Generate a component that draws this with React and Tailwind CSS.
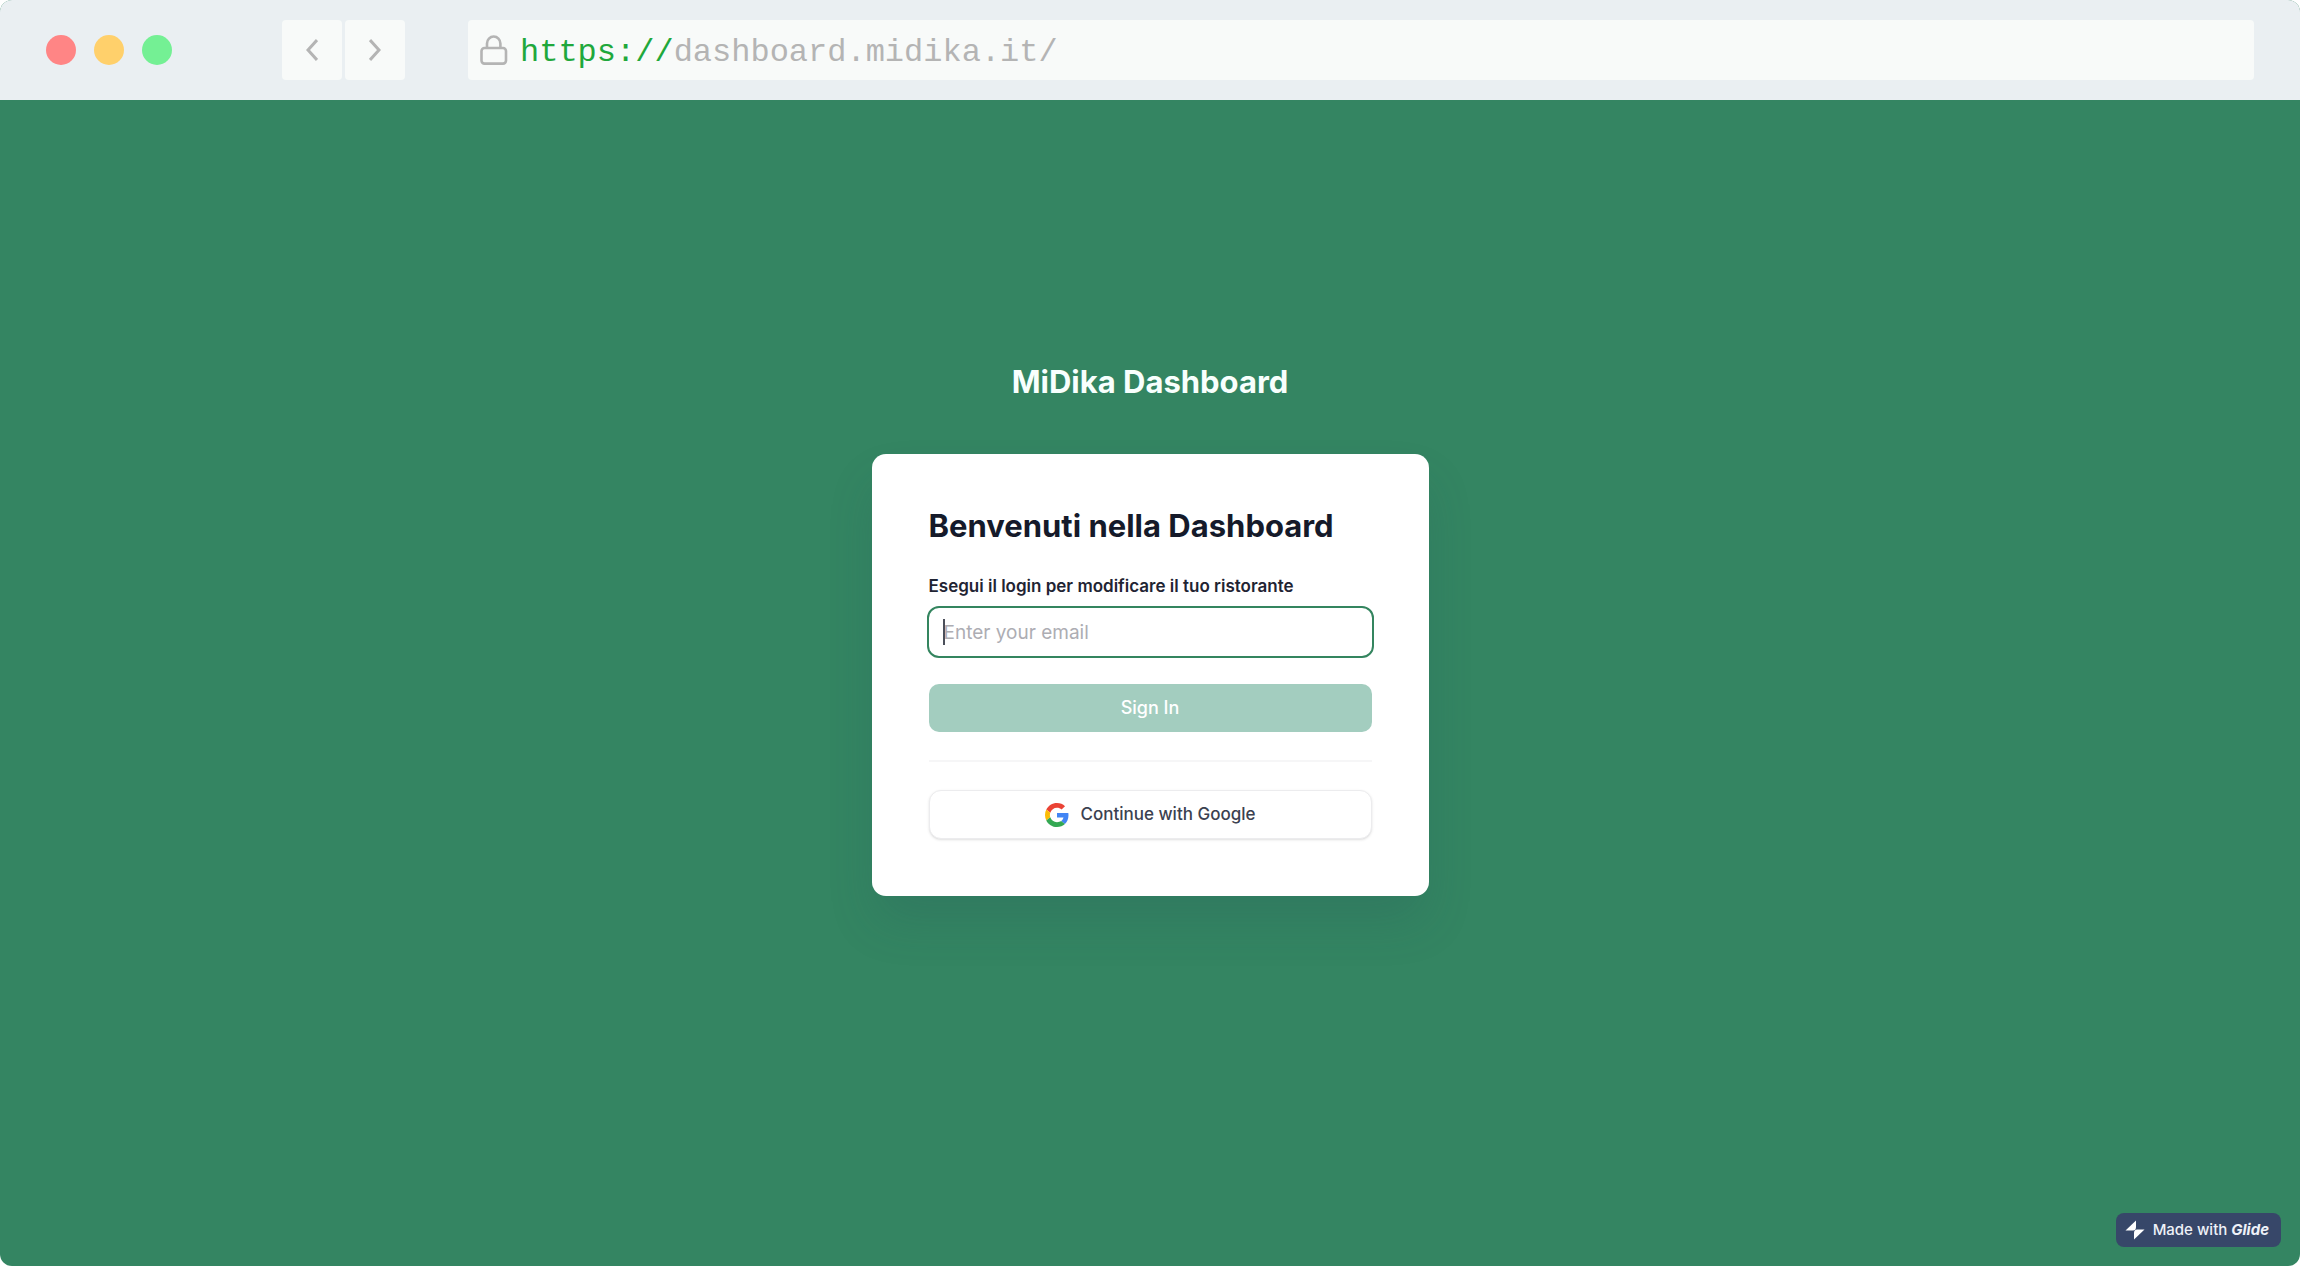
import React from "react";

function GoogleLogo() {
  return (
    <svg viewBox="0 0 48 48" className="size-6" aria-hidden="true">
      <path fill="#EA4335" d="M24 9.5c3.54 0 6.71 1.22 9.21 3.6l6.85-6.85C35.9 2.38 30.47 0 24 0 14.62 0 6.51 5.38 2.56 13.22l7.98 6.19C12.43 13.72 17.74 9.5 24 9.5z" />
      <path fill="#4285F4" d="M46.98 24.55c0-1.57-.15-3.09-.38-4.55H24v9.02h12.94c-.58 2.96-2.26 5.48-4.78 7.18l7.73 6c4.51-4.18 7.09-10.36 7.09-17.65z" />
      <path fill="#FBBC05" d="M10.53 28.59c-.48-1.45-.76-2.99-.76-4.59s.27-3.14.76-4.59l-7.98-6.19C.92 16.46 0 20.12 0 24c0 3.88.92 7.54 2.56 10.78l7.97-6.19z" />
      <path fill="#34A853" d="M24 48c6.48 0 11.93-2.13 15.89-5.81l-7.73-6c-2.15 1.45-4.92 2.3-8.16 2.3-6.26 0-11.57-4.22-13.47-9.91l-7.98 6.19C6.51 42.62 14.62 48 24 48z" />
    </svg>
  );
}

function BrowserBar() {
  return (
    <header className="flex h-[100px] items-center bg-[#eaeff2] px-[46px]">
      <div className="flex gap-[18px]">
        <span className="size-[30px] rounded-full bg-[#ff8585]" />
        <span className="size-[30px] rounded-full bg-[#ffd06b]" />
        <span className="size-[30px] rounded-full bg-[#74f094]" />
      </div>
      <nav className="ml-[110px] flex gap-[3px]">
        <button type="button" aria-label="Back" className="flex size-[60px] items-center justify-center rounded-sm bg-[#f8faf9]">
          <svg viewBox="0 0 12 22" className="h-[22px] w-3" fill="none" stroke="#b4b4b4" strokeWidth="3" aria-hidden="true">
            <path d="M11 1 L2 11 L11 21" />
          </svg>
        </button>
        <button type="button" aria-label="Forward" className="flex size-[60px] items-center justify-center rounded-sm bg-[#f8faf9]">
          <svg viewBox="0 0 12 22" className="h-[22px] w-3" fill="none" stroke="#b4b4b4" strokeWidth="3" aria-hidden="true">
            <path d="M1 1 L10 11 L1 21" />
          </svg>
        </button>
      </nav>
      <div className="ml-[63px] flex h-[60px] flex-1 items-center rounded-sm bg-[#f8faf9] pl-3">
        <svg viewBox="0 0 28 30" className="h-[30px] w-7" fill="none" stroke="#b4b4b4" strokeWidth="2.6" aria-hidden="true">
          <rect x="1.5" y="13" width="24.500" height="15.600" rx="3" />
          <path d="M7 13V8.500a6.700 7 0 0 1 13.400 0v4.500" />
        </svg>
        <p className="ml-3 pt-1.5 font-['Liberation_Mono',monospace] text-[32px] leading-10 text-[#b4b4b4]">
          <span className="text-[#1fa83c]">https://</span>dashboard.midika.it/
        </p>
      </div>
    </header>
  );
}

function LoginCard() {
  return (
    <form className="w-[557px] rounded-[14px] bg-white px-[57px] pt-[52px] pb-[57px] shadow-[0_28px_48px_-4px_rgba(35,80,90,0.2)]">
      <h2 className="text-[31px] leading-10 font-bold text-[#151a2a]">Benvenuti nella Dashboard</h2>
      <label htmlFor="email" className="mt-7 block text-[17px] leading-6 font-semibold text-[#1f2433]">
        Esegui il login per modificare il tuo ristorante
      </label>
      <div className="relative -mx-0.5 mt-2">
        <input
          id="email"
          type="email"
          placeholder="Enter your email"
          className="block h-[52px] w-full rounded-xl border-2 border-[#34855f] bg-white px-[15px] text-[19px] text-[#1f2433] outline-none placeholder:text-[#adadb3]"
        />
        <span className="absolute top-[13px] left-4 h-[26px] w-0.5 bg-[#4b4f5a]" />
      </div>
      <button type="button" className="mt-[26px] block h-12 w-full rounded-[10px] bg-[#a3cdbf] text-lg font-medium text-white">
        Sign In
      </button>
      <hr className="mt-7 border-t-2 border-[#f6f6f7]" />
      <button type="button" className="mt-7 flex h-[49px] w-full items-center justify-center gap-3 rounded-xl border border-[#ececee] bg-white text-[17px] font-medium text-[#3b4150] shadow-sm">
        <GoogleLogo />
        Continue with Google
      </button>
    </form>
  );
}

export default function App() {
  return (
    <div className="flex min-h-screen flex-col overflow-hidden bg-white font-['Inter',sans-serif] [font-optical-sizing:none]">
      <div className="flex flex-1 flex-col overflow-hidden rounded-xl bg-[#348562]">
        <BrowserBar />
        <main className="relative flex flex-1 flex-col items-center pt-[262px]">
          <h1 className="mb-[52px] text-[31px] leading-10 font-bold text-[#f8fffd]">MiDika Dashboard</h1>
          <LoginCard />
          <a href="#glide" className="absolute right-[19px] bottom-[19px] flex h-[34px] items-center rounded-lg bg-[#374769] pr-3 pl-[9px] text-[15px] font-medium text-[#eef1f8]">
            <svg viewBox="0 0 20 20" className="mr-2 size-5" fill="#ffffff" aria-hidden="true">
              <path d="M11 0.500 L0.500 10.500 H8 Q11 10.500 11 7z" />
              <path d="M9 19.500 L19.500 9.500 H12 Q9 9.500 9 13z" />
            </svg>
            Made with&nbsp;<strong className="font-bold italic">Glide</strong>
          </a>
        </main>
      </div>
    </div>
  );
}
